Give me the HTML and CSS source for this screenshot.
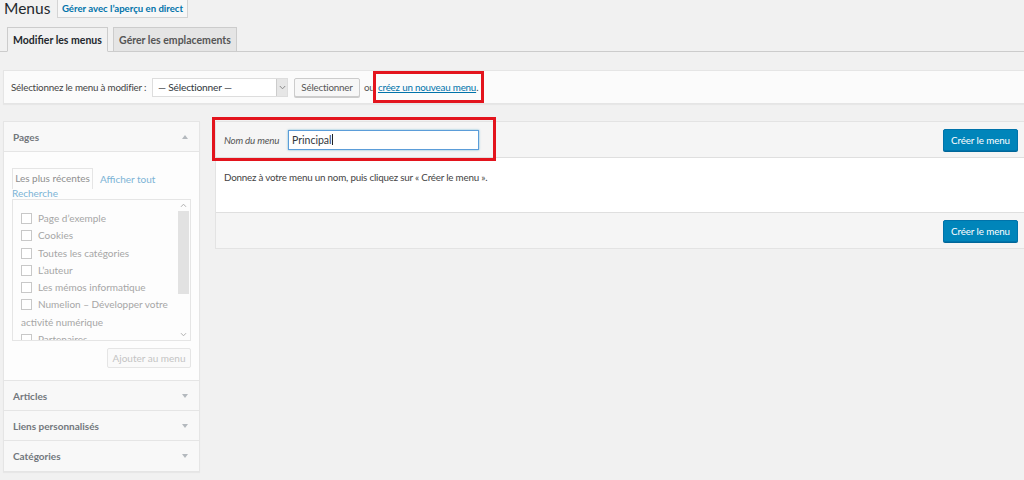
FILE: index.html
```html
<!DOCTYPE html>
<html lang="fr">
<head>
<meta charset="utf-8">
<title>Menus</title>
<link rel="stylesheet" href="styles.css">
</head>
<body>
<div class="wrap">
  <div class="head">
    <h1 class="title">Menus</h1>
    <a class="page-action">Gérer avec l’aperçu en direct</a>
  </div>
  <div class="tabs">
    <a class="tab tab-active">Modifier les menus</a>
    <a class="tab tab-2">Gérer les emplacements</a>
  </div>
  <div class="manage">
    <span class="manage-label">Sélectionnez le menu à modifier :</span>
    <div class="select">
      <span class="select-text">— Sélectionner —</span>
      <span class="select-arrow"><svg width="7" height="5" viewBox="0 0 7 5"><path d="M0.8 1 L3.5 3.8 L6.2 1" fill="none" stroke="#8a8a8a" stroke-width="1"/></svg></span>
    </div>
    <button class="btn">Sélectionner</button>
    <span class="ou">ou</span>
    <a class="new-link">créez un nouveau menu</a><span class="dot">.</span>
  </div>
  <div class="columns">
    <div class="sidebar">
      <div class="acc-head"><span>Pages</span><i class="tri tri-up"></i></div>
      <div class="acc-body">
        <div class="ptabs">
          <span class="ptab">Les plus récentes</span>
          <a class="plink">Afficher tout</a>
        </div>
        <a class="plink plink-2">Recherche</a>
        <div class="listbox">
          <div class="items">
            <div class="item"><i class="cb"></i>Page d’exemple</div>
            <div class="item"><i class="cb"></i>Cookies</div>
            <div class="item"><i class="cb"></i>Toutes les catégories</div>
            <div class="item"><i class="cb"></i>L’auteur</div>
            <div class="item"><i class="cb"></i>Les mémos informatique</div>
            <div class="item"><i class="cb"></i>Numelion – Développer votre<br>activité numérique</div>
            <div class="item"><i class="cb"></i>Partenaires</div>
          </div>
          <div class="scroll">
            <span class="sarrow"><svg width="7" height="5" viewBox="0 0 7 5"><path d="M1 3.8 L3.5 1.2 L6 3.8" fill="none" stroke="#b0b0b0" stroke-width="1"/></svg></span>
            <span class="track"><span class="thumb"></span></span>
            <span class="sarrow"><svg width="7" height="5" viewBox="0 0 7 5"><path d="M1 1.2 L3.5 3.8 L6 1.2" fill="none" stroke="#b0b0b0" stroke-width="1"/></svg></span>
          </div>
        </div>
        <div class="add-row"><button class="btn-add">Ajouter au menu</button></div>
      </div>
      <div class="acc-head"><span>Articles</span><i class="tri"></i></div>
      <div class="acc-head"><span>Liens personnalisés</span><i class="tri"></i></div>
      <div class="acc-head acc-last"><span>Catégories</span><i class="tri"></i></div>
    </div>
    <div class="main">
      <div class="main-head">
        <div class="name-field">
          <span class="name-label">Nom du menu</span>
          <span class="name-input">Principal<i class="caret"></i></span>
        </div>
        <button class="primary">Créer le menu</button>
      </div>
      <div class="main-body">Donnez à votre menu un nom, puis cliquez sur « Créer le menu ».</div>
      <div class="main-foot"><button class="primary">Créer le menu</button></div>
    </div>
  </div>
</div>
</body>
</html>
```
FILE: styles.css
```css
* { box-sizing: border-box; }
html, body { margin: 0; padding: 0; }
body {
  background: #f1f1f1;
  font-family: Lato, "Open Sans", sans-serif;
  font-size: 9.8px;
  letter-spacing: -0.2px;
  color: #444;
  width: 1024px;
  height: 480px;
  overflow: hidden;
}
.wrap { width: 1028px; }

/* header */
.head { display: flex; align-items: flex-start; height: 27px; padding-left: 4px; }
.title { flex: none; margin: -1px 0 0 0; font-weight: 400; font-size: 15.5px; line-height: 18px; letter-spacing: 0; color: #23282d; width: 46px; white-space: nowrap; }
.page-action {
  margin-left: 7px; width: 131px; height: 18px; border: 1px solid #d4d4d4; border-top: none;
  background: #f7f7f7; color: #0073aa; font-weight: 700; font-size: 9.6px; line-height: 17px;
  text-align: center; white-space: nowrap; letter-spacing: 0;
}

/* tabs */
.tabs { display: flex; gap: 5px; height: 25px; padding-left: 7px; border-bottom: 1px solid #ccc; }
.tab {
  height: 25px; border: 1px solid #ccc; background: #e5e5e5; color: #555; letter-spacing: 0;
  font-weight: 700; font-size: 10.5px; line-height: 24px; text-align: center; white-space: nowrap;
}
.tab-active { width: 101px; background: #f1f1f1; border-bottom-color: #f1f1f1; color: #23282d; }
.tab-2 { width: 124px; }

/* manage bar */
.manage {
  display: flex; align-items: center; height: 34px; margin: 18px 0 0 3px; padding-left: 7px;
  background: #fbfbfb; border: 1px solid #e5e5e5; box-shadow: 0 1px 1px rgba(0,0,0,.04);
  white-space: nowrap; color: #444;
}
.manage-label { width: 141px; }
.select {
  display: flex; width: 136px; height: 19px; border: 1px solid #ddd; background: #fff;
}
.select-text { flex: 1; padding-left: 5px; line-height: 17px; color: #32373c; font-size: 10.2px; }
.select-arrow {
  width: 11px; background: #e6e6e6; border-left: 1px solid #ccc;
  display: flex; align-items: center; justify-content: center;
}
.btn {
  margin-left: 6px; width: 66px; height: 19px; padding: 0; border: 1px solid #ccc; border-radius: 2px;
  background: #f7f7f7; color: #555; font-family: inherit; font-size: 9.8px; line-height: 17px; letter-spacing: -0.2px;
  box-shadow: 0 1px 0 #ccc;
}
.ou { margin-left: 4px; width: 14px; color: #555; }
.new-link {
  position: relative; display: inline-block; height: 14px; line-height: 14px;
  color: #0073aa; text-decoration: underline;
}
.new-link::after {
  content: ""; position: absolute; left: -5px; right: -8px; top: -9px; bottom: -9px;
  border: 3px solid #e3141d;
}
.dot { color: #444; }

/* columns */
.columns { display: flex; align-items: flex-start; margin-top: 17px; }

/* sidebar */
.sidebar {
  margin-left: 3px; width: 197px; border: 1px solid #e5e5e5; background: #fdfdfd;
  box-shadow: 0 1px 1px rgba(0,0,0,.04);
}
.acc-head {
  display: flex; align-items: center; justify-content: space-between;
  height: 30px; padding: 0 11px 0 9px; background: #f8f8f8; border-bottom: 1px solid #e5e5e5;
  color: #72777c; font-weight: 700; font-size: 10px; letter-spacing: 0;
}
.acc-last { border-bottom: none; }
.tri { width: 0; height: 0; border-left: 3px solid transparent; border-right: 3px solid transparent; border-top: 4px solid #b4b9be; }
.tri-up { border-top: none; border-bottom: 4px solid #b4b9be; }
.acc-body { padding: 16px 0 12px 8px; border-bottom: 1px solid #e5e5e5; background: #fdfdfd; }
.ptabs { display: flex; align-items: center; height: 21px; }
.ptab {
  width: 81px; height: 21px; border: 1px solid #e5e5e5; border-bottom: none; background: #fdfdfd;
  color: #8f8f8f; text-align: center; line-height: 19px; white-space: nowrap; font-size: 10px; letter-spacing: 0;
}
.plink { color: #7cb4d6; white-space: nowrap; font-size: 10px; letter-spacing: 0; }
.ptabs .plink { margin-left: 7px; }
.plink-2 { display: block; height: 10px; line-height: 8px; }
.listbox {
  display: flex; width: 179px; height: 142px; border: 1px solid #e5e5e5; background: #fdfdfd; overflow: hidden;
}
.items { flex: 1; padding: 10px 0 0 8px; color: #a6a6a6; white-space: nowrap; line-height: 17.3px; font-size: 10px; letter-spacing: 0; }
.cb {
  display: inline-block; width: 11px; height: 11px; border: 1px solid #c8c8c8; background: #fff;
  vertical-align: -2px; margin-right: 6px;
}
.scroll { width: 11px; margin-right: 1px; display: flex; flex-direction: column; }
.sarrow { height: 11px; display: flex; align-items: center; justify-content: center; }
.track { flex: 1; position: relative; }
.thumb { position: absolute; left: 0; right: 0; top: 0; height: 83px; background: #e2e2e2; }
.add-row { display: flex; justify-content: flex-end; padding: 7px 8px 0 0; }
.btn-add {
  width: 84px; height: 20px; padding: 0; border: 1px solid #e5e5e5; border-radius: 2px;
  background: #fafafa; color: #c4c4c4; font-family: inherit; font-size: 10px;
}

/* main */
.main { margin-left: 15px; flex: 1; border: 1px solid #e3e3e3; border-right: none; }
.main-head {
  position: relative; display: flex; align-items: center; justify-content: space-between;
  height: 36px; padding: 0 10px 0 8px; background: #f5f5f5; border-bottom: 1px solid #dfdfdf;
}
.main-head::after {
  content: ""; position: absolute; left: -4px; top: -5px; width: 278px; height: 38px;
  border: 3px solid #e3141d;
}
.name-field { display: flex; align-items: center; }
.name-label { width: 64px; font-style: italic; color: #555; }
.name-input {
  display: flex; align-items: center; width: 191px; height: 20px; padding-left: 3px;
  border: 1px solid #5b9dd9; background: #fff; box-shadow: 0 0 2px rgba(30,140,190,.6);
  color: #32373c; font-size: 10.5px; letter-spacing: 0;
}
.caret { display: inline-block; width: 1px; height: 11px; background: #222; }
.primary {
  width: 75px; height: 22px; padding: 0; border: 1px solid #0073aa; border-radius: 2px;
  background: #0085ba; color: #fff; font-family: inherit; font-size: 9.8px; letter-spacing: -0.1px;
  box-shadow: 0 1px 0 #006799;
}
.main-body { height: 55px; padding: 13px 0 0 8px; background: #fff; border-bottom: 1px solid #dfdfdf; color: #444; }
.main-foot { display: flex; justify-content: flex-end; align-items: center; height: 35px; padding: 0 10px; background: #f5f5f5; }
```
